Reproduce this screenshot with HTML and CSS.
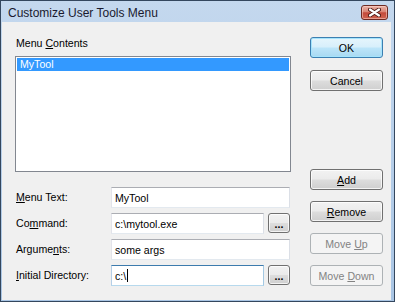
FILE: index.html
```html
<!DOCTYPE html>
<html lang="en">
<head>
  <meta charset="UTF-8" />
  <title>Customize User Tools Menu</title>
  <link rel="stylesheet" href="styles.css">
</head>
<body>
  <div class="window">
    <div class="titlebar">
      <span class="title">Customize User Tools Menu</span>
      <div class="close">
        <svg width="13" height="9" viewBox="0 0 13 9">
          <path d="M2 1.5 L11 7.5 M11 1.5 L2 7.5" stroke="#4a1712" stroke-width="4" stroke-linecap="round" />
          <path d="M2 1.5 L11 7.5 M11 1.5 L2 7.5" stroke="#ffffff" stroke-width="2.2" stroke-linecap="round" />
        </svg>
      </div>
    </div>

    <div class="client">
      <div class="main">
        <div class="caption">Menu <u>C</u>ontents</div>
        <div class="listbox">
          <div class="item selected">MyTool</div>
        </div>

        <div class="form">
          <label><u>M</u>enu Text:</label>
          <div class="field"><div class="textbox">MyTool</div></div>

          <label>Co<u>m</u>mand:</label>
          <div class="field">
            <div class="textbox">c:\mytool.exe</div>
            <button class="btn browse">...</button>
          </div>

          <label>Argume<u>n</u>ts:</label>
          <div class="field"><div class="textbox">some args</div></div>

          <label><u>I</u>nitial Directory:</label>
          <div class="field">
            <div class="textbox focused">c:\<span class="caret"></span></div>
            <button class="btn browse">...</button>
          </div>
        </div>
      </div>

      <div class="side">
        <div class="group">
          <button class="btn default">OK</button>
          <button class="btn">Cancel</button>
        </div>
        <div class="group tight">
          <button class="btn"><u>A</u>dd</button>
          <button class="btn"><u>R</u>emove</button>
          <button class="btn" disabled>Move <u>U</u>p</button>
          <button class="btn" disabled>Move <u>D</u>own</button>
        </div>
      </div>
    </div>
  </div>
</body>
</html>
```

FILE: styles.css
```css
* {
  box-sizing: border-box;
  margin: 0;
  padding: 0;
}

body {
  font-family: 'Liberation Sans', Arial, sans-serif;
  font-size: 10.6px;
  color: #000;
  background: #ffffff;
}

.window {
  width: 395px;
  height: 302px;
  border: 1px solid #34475e;
  background: linear-gradient(to bottom, #c4d8ee, #a9c5e4);
  padding: 0 3px 1px 1px;
  display: flex;
  flex-direction: column;
}

.titlebar {
  height: 21px;
  display: flex;
  align-items: center;
  position: relative;
}

.title {
  font-family: 'Liberation Sans', Arial, sans-serif;
  font-size: 12px;
  color: #1a1a2e;
  padding-left: 6px;
  padding-top: 2px;
}

.close {
  position: absolute;
  right: 3px;
  top: 4px;
  width: 27px;
  height: 15px;
  border: 1px solid #6e2a22;
  border-radius: 3px;
  background: linear-gradient(to bottom, #eab3a8 0%, #d98474 45%, #c34a3b 52%, #cf6350 100%);
  box-shadow: inset 0 0 0 1px rgba(255, 220, 210, 0.5);
  display: flex;
  align-items: center;
  justify-content: center;
}

.client {
  flex: 1;
  background: #f0f0f0;
  padding: 15px 8px 14px 13px;
  display: flex;
  gap: 19px;
}

.main {
  width: 276px;
  display: flex;
  flex-direction: column;
}

.caption {
  line-height: 13px;
  padding-left: 1px;
  margin-bottom: 6px;
}

.listbox {
  height: 116px;
  background: #fff;
  border: 1px solid #828790;
  padding: 1px;
}

.item {
  height: 13px;
  line-height: 13px;
  padding-left: 3px;
}

.item.selected {
  background: #3399ff;
  color: #fff;
}

.form {
  margin-top: auto;
  display: grid;
  grid-template-columns: 96px 1fr;
  grid-auto-rows: 21px;
  row-gap: 5px;
  padding-right: 1px;
}

.form label {
  display: flex;
  align-items: center;
  padding-left: 1px;
  padding-bottom: 2px;
}

.field {
  display: flex;
  gap: 4px;
}

.textbox {
  flex: 1;
  background: #fff;
  border: 1px solid;
  border-color: #abadb3 #dbdfe6 #e3e9ef #e2e3ea;
  padding-left: 3px;
  display: flex;
  align-items: center;
}

.textbox.focused {
  border-color: #3d7bad #a4c9e3 #b7d9ed #b5cfe7;
}

.caret {
  display: inline-block;
  width: 1px;
  height: 13px;
  background: #000;
  margin-left: 1px;
}

.side {
  width: 73px;
  display: flex;
  flex-direction: column;
  justify-content: space-between;
}

.group {
  display: flex;
  flex-direction: column;
  gap: 12px;
}

.group.tight {
  gap: 11px;
}

.btn {
  height: 21px;
  font-family: 'Liberation Sans', Arial, sans-serif;
  font-size: 10.6px;
  color: #000;
  border: 1px solid #707070;
  border-radius: 3px;
  background: linear-gradient(to bottom, #f2f2f2 0%, #ebebeb 48%, #dddddd 52%, #cfcfcf 100%);
  box-shadow: inset 0 0 0 1px rgba(255, 255, 255, 0.75);
}

.btn.default {
  border-color: #3c7fb1;
  background: linear-gradient(to bottom, #e6f5fc 0%, #d7effb 48%, #bde5f9 52%, #a8d9f2 100%);
  box-shadow: inset 0 0 0 1px #a5e4fc;
}

.btn:disabled {
  border-color: #adb2b5;
  background: #f4f4f4;
  color: #838383;
  box-shadow: none;
}

.btn.browse {
  width: 22px;
  height: 20px;
  font-weight: bold;
  line-height: 1;
  padding-top: 3px;
}
```
